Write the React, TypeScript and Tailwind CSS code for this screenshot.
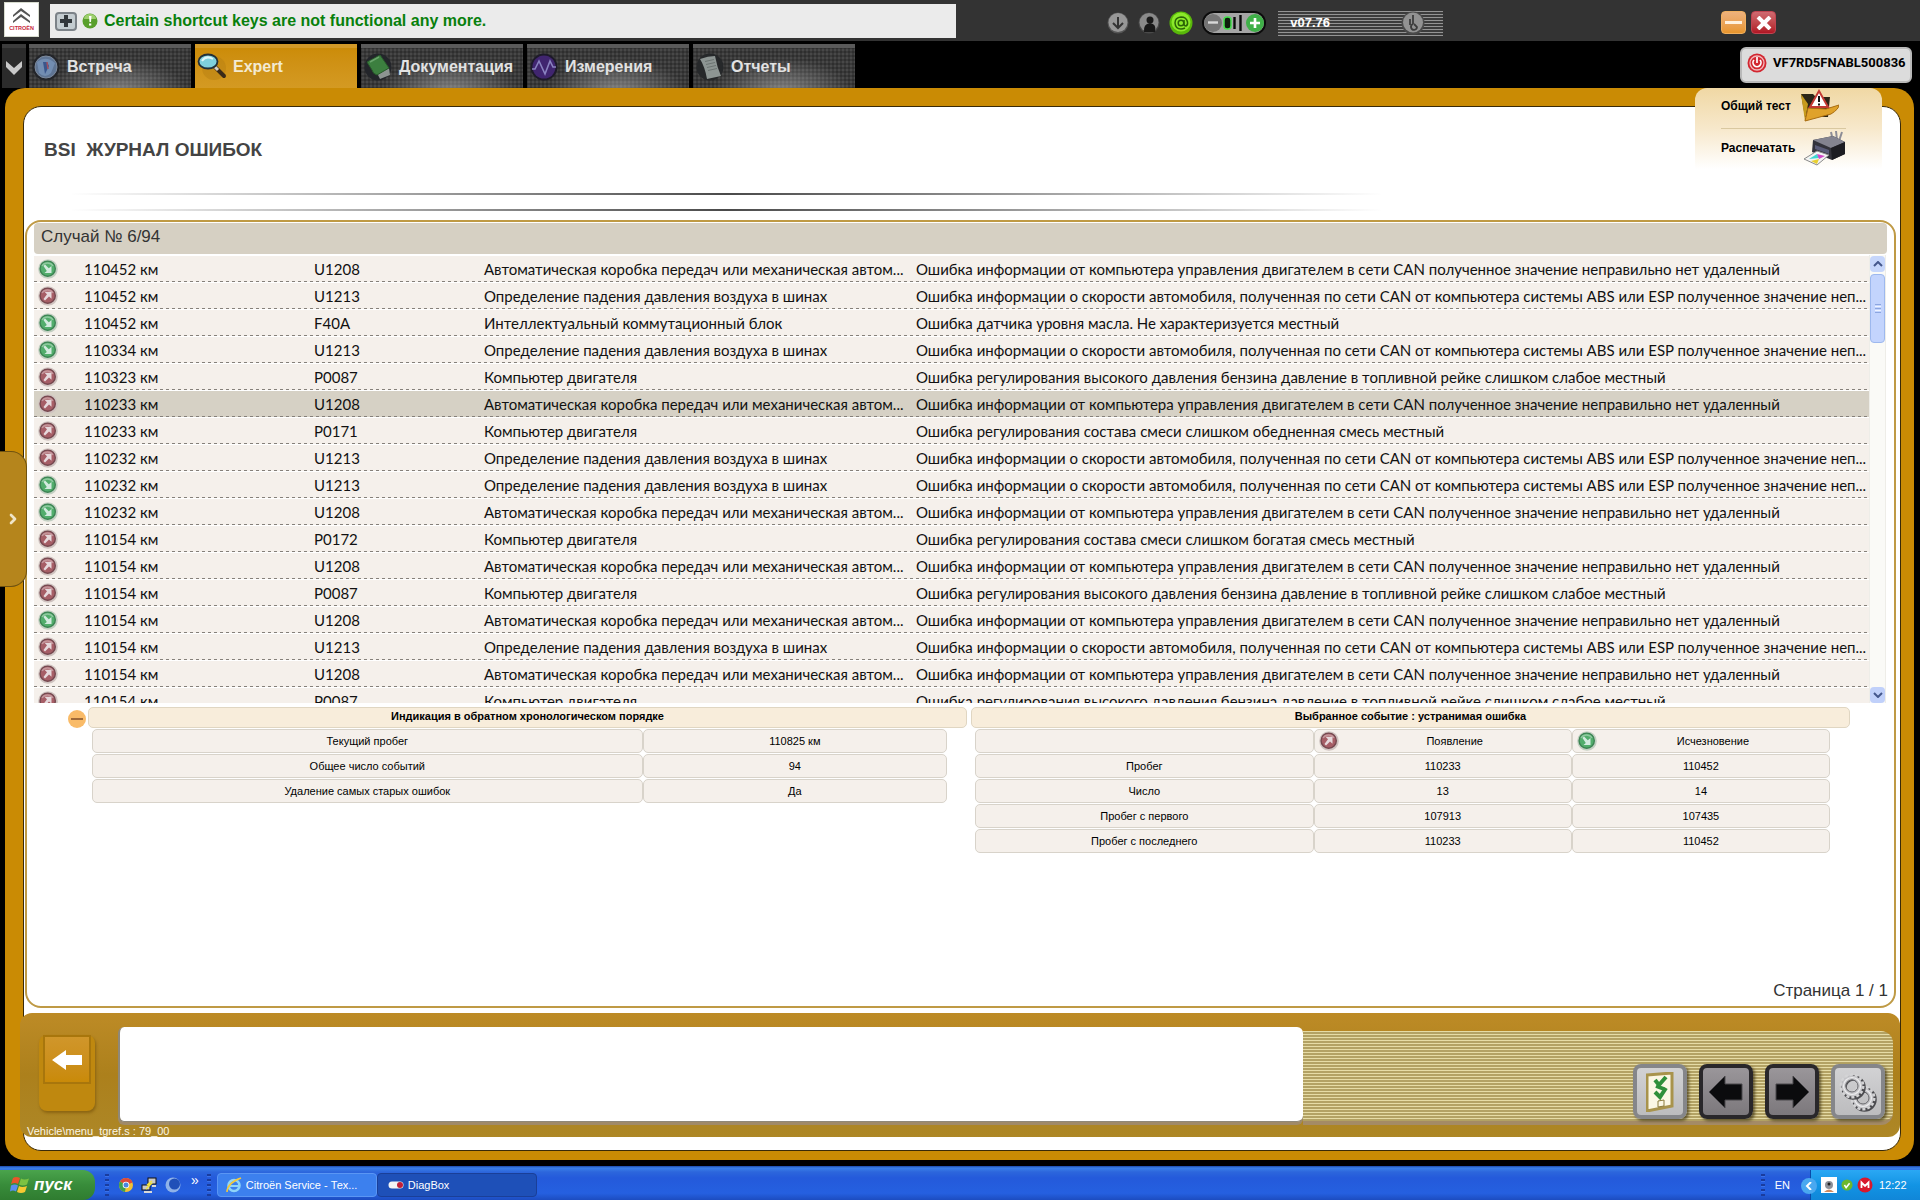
import React, { useState } from 'react';
import { ChevronRight } from 'lucide-react';

type EventKind = 'appeared' | 'cleared';

interface FaultEvent {
  kind: EventKind;
  km: string;
  code: string;
  unit: string;
  text: string;
}

const GEARBOX = 'Автоматическая коробка передач или механическая автом...';
const TYRES = 'Определение падения давления воздуха в шинах';
const ENGINE = 'Компьютер двигателя';
const ERR_ENGINE_CAN =
  'Ошибка информации от компьютера управления двигателем в сети CAN полученное значение неправильно нет удаленный';
const ERR_SPEED_CAN =
  'Ошибка информации о скорости автомобиля, полученная по сети CAN от компьютера системы ABS или ESP полученное значение неп...';
const ERR_PRESSURE =
  'Ошибка регулирования высокого давления бензина давление в топливной рейке слишком слабое местный';

const events: FaultEvent[] = [
  { kind: 'cleared', km: '110452 км', code: 'U1208', unit: GEARBOX, text: ERR_ENGINE_CAN },
  { kind: 'appeared', km: '110452 км', code: 'U1213', unit: TYRES, text: ERR_SPEED_CAN },
  { kind: 'cleared', km: '110452 км', code: 'F40A', unit: 'Интеллектуальный коммутационный блок', text: 'Ошибка датчика уровня масла. Не характеризуется местный' },
  { kind: 'cleared', km: '110334 км', code: 'U1213', unit: TYRES, text: ERR_SPEED_CAN },
  { kind: 'appeared', km: '110323 км', code: 'P0087', unit: ENGINE, text: ERR_PRESSURE },
  { kind: 'appeared', km: '110233 км', code: 'U1208', unit: GEARBOX, text: ERR_ENGINE_CAN },
  { kind: 'appeared', km: '110233 км', code: 'P0171', unit: ENGINE, text: 'Ошибка регулирования состава смеси слишком обедненная смесь местный' },
  { kind: 'appeared', km: '110232 км', code: 'U1213', unit: TYRES, text: ERR_SPEED_CAN },
  { kind: 'cleared', km: '110232 км', code: 'U1213', unit: TYRES, text: ERR_SPEED_CAN },
  { kind: 'cleared', km: '110232 км', code: 'U1208', unit: GEARBOX, text: ERR_ENGINE_CAN },
  { kind: 'appeared', km: '110154 км', code: 'P0172', unit: ENGINE, text: 'Ошибка регулирования состава смеси слишком богатая смесь местный' },
  { kind: 'appeared', km: '110154 км', code: 'U1208', unit: GEARBOX, text: ERR_ENGINE_CAN },
  { kind: 'appeared', km: '110154 км', code: 'P0087', unit: ENGINE, text: ERR_PRESSURE },
  { kind: 'cleared', km: '110154 км', code: 'U1208', unit: GEARBOX, text: ERR_ENGINE_CAN },
  { kind: 'appeared', km: '110154 км', code: 'U1213', unit: TYRES, text: ERR_SPEED_CAN },
  { kind: 'appeared', km: '110154 км', code: 'U1208', unit: GEARBOX, text: ERR_ENGINE_CAN },
  { kind: 'appeared', km: '110154 км', code: 'P0087', unit: ENGINE, text: ERR_PRESSURE },
];

const summary = [
  ['Текущий пробег', '110825 км'],
  ['Общее число событий', '94'],
  ['Удаление самых старых ошибок', 'Да'],
];

const details = [
  ['Пробег', '110233', '110452'],
  ['Число', '13', '14'],
  ['Пробег с первого', '107913', '107435'],
  ['Пробег с последнего', '110233', '110452'],
];

const KindIcon: React.FC<{ kind: EventKind }> = ({ kind }) => (
  <svg viewBox="0 0 20 20" className="block h-5 w-5">
    <circle cx="10" cy="10" r="9.8" fill={kind === 'cleared' ? '#c3cfc2' : '#cfc3c0'} />
    <circle cx="9.7" cy="9.7" r="7.6" fill={kind === 'cleared' ? '#52ad6c' : '#a65e66'} stroke={kind === 'cleared' ? '#3c8453' : '#75484f'} strokeWidth="1.4" />
    <path d="M4 7a6 5 0 0 1 11 0" fill="none" stroke="#fff" strokeOpacity=".35" strokeWidth="1.6" />
    {kind === 'cleared' ? (
      <path d="M5.500 7 7 5.500l3.800 3.800L13.500 7v7h-7l2.300-2z" fill="#d3eadf" />
    ) : (
      <path d="M5.500 13 7 14.500l4-4 2.500 2.300V5.800h-7L9 8.300z" fill="#e6d9dc" />
    )}
  </svg>
);

const GlobeIcon = () => (
  <svg viewBox="0 0 28 28" className="h-7 w-7">
    <circle cx="14" cy="14" r="13.500" fill="#23252a" />
    <circle cx="14" cy="14" r="11" fill="#5f7594" stroke="#7d8a9c" />
    <path d="M5 9q9-7 18 1l-4 10q-6 6-12 0z" fill="#7f9cc4" opacity=".6" />
    <path d="m11 9 2 12 4-8-2-4z" fill="#3a568c" />
    <path d="m15 9 1 7" stroke="#a05060" strokeWidth="1.500" />
  </svg>
);

const LensIcon = () => (
  <svg viewBox="0 0 30 28" className="h-7 w-[30px]">
    <circle cx="17" cy="15" r="12" fill="#b77f12" opacity=".5" />
    <path d="m18 14 9 9" stroke="#3a2a18" strokeWidth="4" strokeLinecap="round" />
    <path d="m18 14 3 3" stroke="#d8d0c0" strokeWidth="3" />
    <ellipse cx="11" cy="8.500" rx="9.500" ry="7" fill="#7fd0dc" stroke="#22303a" strokeWidth="1.800" />
    <path d="M5 8q4-6 11-2" fill="none" stroke="#dff6f8" strokeWidth="2" />
  </svg>
);

const BookIcon = () => (
  <svg viewBox="0 0 28 28" className="h-7 w-7">
    <circle cx="14" cy="14" r="13.500" fill="#23252a" />
    <path d="m13 20 12-5 1 7-10 4z" fill="#8d9491" />
    <path d="M3 9 16 2l9 13-12 7q-4-1-5-5z" fill="#3c7f3f" stroke="#285a2b" />
    <path d="m6 9 9-5" stroke="#6aa56c" strokeWidth="1.500" />
  </svg>
);

const WaveIcon = () => (
  <svg viewBox="0 0 28 28" className="h-7 w-7">
    <circle cx="14" cy="14" r="13.500" fill="#1d1a29" />
    <circle cx="14" cy="14" r="11.500" fill="#40256f" />
    <path d="M2 16h3l4-8 6 13 5-13 3 6h3" fill="none" stroke="#8a83c0" strokeWidth="1.600" />
  </svg>
);

const ReportIcon = () => (
  <svg viewBox="0 0 28 28" className="h-7 w-7">
    <circle cx="14" cy="14" r="13.500" fill="#26282a" />
    <path d="M4 6q8-3 15-3 2 11 6 20l-14 3Q9 14 4 6z" fill="#8d9593" />
    <path d="M9 8.500l9-2M10 11.500l9-2M11 14.500l9-2M12 17.500l9-2" stroke="#6c7472" />
  </svg>
);

const tabs = [
  { label: 'Встреча', icon: <GlobeIcon /> },
  { label: 'Expert', icon: <LensIcon /> },
  { label: 'Документация', icon: <BookIcon /> },
  { label: 'Измерения', icon: <WaveIcon /> },
  { label: 'Отчеты', icon: <ReportIcon /> },
];

const darkTab =
  'bg-[#2e2e2e] bg-[radial-gradient(ellipse_at_55%_110%,rgba(190,190,190,0.55),transparent_55%),radial-gradient(#484848_1px,transparent_2px)] bg-[length:auto,4px_4px] border-t-4 border-[#5a5a5a]';

const TopBar = () => (
  <header className="flex h-[41px] items-start bg-[#333333]">
    <div className="mt-0.5 ml-1 h-[35px] w-[35px] border border-[#d8dccf] bg-white">
      <svg viewBox="0 0 33 33" className="h-full w-full">
        <path d="m8 14 8-6 9 6v-2l-9-7-8 7zM8 20l8-6 9 6v-2l-9-7-8 7z" fill="#555" />
        <text x="16.500" y="27" textAnchor="middle" fontSize="5.500" fontWeight="bold" fill="#c8283c" fontFamily="Liberation Sans">CITROËN</text>
      </svg>
    </div>
    <div className="mt-1 ml-[11px] flex h-[34px] w-[47.200%] items-center bg-[#ebebeb] pl-[5px]">
      <button aria-label="Развернуть" className="flex h-[19px] w-[22px] items-center justify-center rounded border-2 border-[#7c8288] bg-[#c4ccd0]">
        <svg viewBox="0 0 12 12" className="h-3 w-3"><path d="M4 0h4v4h4v4H8v4H4V8H0V4h4z" fill="#32373b" /></svg>
      </button>
      <svg viewBox="0 0 16 16" className="ml-[5px] h-4 w-4">
        <circle cx="8" cy="8" r="7.500" fill="#5aa02c" />
        <path d="M2 6a6 5 0 0 1 12 0z" fill="#9fd06f" />
        <path d="M7 3h2.500L9 9H7.500zM7 10.500h2.300v2H7z" fill="#fff" />
      </svg>
      <p className="ml-1.5 truncate text-base font-bold text-[#08800c]">Certain shortcut keys are not functional any more.</p>
    </div>
    <div className="ml-[151px] flex h-[46px] items-center">
      <svg viewBox="0 0 22 22" className="h-[22px] w-[22px]">
        <circle cx="11" cy="11" r="10.500" fill="#555" /><circle cx="11" cy="10.500" r="9.500" fill="#979797" />
        <path d="M11 5v11M6 11l5 5 5-5" fill="none" stroke="#333" strokeWidth="2" />
      </svg>
      <svg viewBox="0 0 22 22" className="ml-[9px] h-[22px] w-[22px]">
        <circle cx="11" cy="11" r="10.500" fill="#4a4a4a" /><circle cx="11" cy="10.500" r="9.500" fill="#8a8a8a" />
        <circle cx="12" cy="8" r="3.500" fill="#191919" /><path d="M6 20q-1-8 6-9 7 1 5 9z" fill="#191919" />
      </svg>
      <svg viewBox="0 0 24 24" className="ml-[9px] h-6 w-6">
        <circle cx="12" cy="12" r="11.500" fill="#59b80a" /><circle cx="12" cy="11" r="9.500" fill="#8be82a" />
        <circle cx="12" cy="12" r="2.800" fill="none" stroke="#2b6406" strokeWidth="1.500" />
        <path d="M15 9v4q0 2 2 2 2-1 1.500-4-1-5-6.500-5-6 .5-6 6 .5 6 6 6 2 0 4-1" fill="none" stroke="#2b6406" strokeWidth="1.500" />
      </svg>
      <svg viewBox="0 0 64 24" className="ml-[9px] h-6 w-16">
        <rect x="1" y="1" width="62" height="22" rx="11" fill="#a5a5a5" stroke="#0c0c0c" strokeWidth="2" />
        <circle cx="11" cy="12" r="9" fill="#747474" /><path d="M6 11.500h10" stroke="#d8d8d8" strokeWidth="2.400" />
        <rect x="22" y="6" width="7" height="12" rx="3" fill="#0d1c0d" stroke="#44e04c" strokeWidth="1.500" />
        <path d="M32.500 6v12M38.500 4v16" stroke="#0a0a0a" strokeWidth="2.400" />
        <circle cx="53" cy="12" r="9" fill="#3fb048" /><path d="M48 12h10M53 7v10" stroke="#fff" strokeWidth="2.600" />
      </svg>
      <div className="ml-3 flex h-[25px] w-[165px] items-center justify-between bg-[repeating-linear-gradient(#949494_0_1px,#3c3c3c_1px_3px)] pr-[18px] pl-3 text-[13px] font-bold text-white">
        <span>v07.76</span>
        <svg viewBox="0 0 24 24" className="h-6 w-6">
          <circle cx="12" cy="12" r="11.500" fill="#4a4a4a" /><circle cx="12" cy="11.500" r="10" fill="#929292" />
          <path d="M12 4v9M9 8v6M12 13a3 3 0 1 0 4 3l-3-3" fill="none" stroke="#3d3d3d" strokeWidth="1.800" />
        </svg>
      </div>
    </div>
    <div className="mt-[11px] mr-36 ml-auto flex gap-[5px]">
      <button aria-label="Свернуть" className="flex h-[23px] w-[25px] items-center justify-center rounded-sm border border-[#f0b060] bg-linear-to-b from-[#eeb27c] to-[#e8962c]">
        <span className="h-[3px] w-[17px] bg-[#fff1de]" />
      </button>
      <button aria-label="Закрыть" className="flex h-[23px] w-[25px] items-center justify-center rounded-sm border border-[#c04450] bg-linear-to-b from-[#cf6a70] to-[#b01424]">
        <svg viewBox="0 0 16 14" className="h-3.5 w-4"><path d="m2 1 12 12M14 1 2 13" stroke="#fff" strokeWidth="4" /></svg>
      </button>
    </div>
  </header>
);

const Tabs = () => {
  const [active, setActive] = useState('Expert');
  return (
    <nav className="flex h-[47px] items-stretch bg-black pt-[3px] pl-0.5">
      <button aria-label="Меню" className="flex w-6 items-center justify-center border-t-4 border-[#3c3c3c] bg-[#2b2b2b]">
        <svg viewBox="0 0 16 14" className="h-3.5 w-4"><path d="M0 0 8 7l8-7v6l-8 8-8-8z" fill="#c9c9c9" /></svg>
      </button>
      <div className="ml-[3px] flex gap-1">
        {tabs.map((tab) => (
          <button
            key={tab.label}
            onClick={() => setActive(tab.label)}
            className={`flex w-[162px] items-center gap-1.5 border-t-4 pb-0.5 pl-0.5 text-base font-bold whitespace-nowrap ${
              active === tab.label
                ? 'border-[#d39a28] bg-linear-to-b from-[#cc8c08] to-[#d49a22] text-[#f3ead2]'
                : `text-[#e2e2e2] ${darkTab}`
            }`}
          >
            <span className="flex w-[30px] shrink-0 justify-center">{tab.icon}</span>
            {tab.label}
          </button>
        ))}
      </div>
      <button className="mt-[3px] mr-2 mb-[5px] ml-auto flex w-[172px] items-center rounded-md border-2 border-[#b9b9b9] bg-[#dcdcdc] pb-1 pl-[5px] font-[Roboto,sans-serif] text-[13px] font-bold text-black">
        <svg viewBox="0 0 20 20" className="mr-1.5 h-5 w-5 shrink-0">
          <circle cx="10" cy="10" r="9.500" fill="#d22630" /><circle cx="10" cy="10" r="7" fill="none" stroke="#f2b9bb" strokeWidth="1.300" />
          <path d="M10 4v6M7 7a4 4 0 1 0 6 0" fill="none" stroke="#fff" strokeWidth="1.700" />
        </svg>
        VF7RD5FNABL500836
      </button>
    </nav>
  );
};

const ActionMenu = () => (
  <div className="absolute top-0 right-8 w-[187px] rounded-t-xl bg-linear-to-b from-[#f0d8a4] via-[#f7e8cb] to-white pl-[26px] text-xs font-bold text-black">
    <button className="flex h-10 w-full items-center gap-2 pb-1 text-left">
      Общий тест
      <svg viewBox="0 0 40 34" className="h-[34px] w-10">
        <path d="M2 5h12l3 3h14l-2 20H6z" fill="#2b2618" /><path d="m2 5 4 27 3-17z" fill="#c69a1c" />
        <path d="m6 32 3-13 18 1 13-4q0 4-8 9z" fill="#e0a22a" stroke="#a86c10" />
        <path d="m20 2 9 16H11z" fill="#fff" stroke="#c23a34" strokeWidth="2" /><path d="M20 7v6M20 14.500v2" stroke="#111" strokeWidth="2" />
      </svg>
    </button>
    <div className="mr-9 h-px bg-[#d9c8a0]" />
    <button className="flex h-10 w-full items-center gap-2 pb-0.5 text-left">
      Распечатать
      <svg viewBox="0 0 44 36" className="h-9 w-11">
        <path d="m28 2 2 9M33 1l1 9M39 2l-3 9" stroke="#8c8c96" strokeWidth="2" />
        <path d="M10 10 30 6l12 6v12l-13 6L9 22z" fill="#33333b" /><path d="m10 10 20-4 12 6-14 6z" fill="#83838f" />
        <path d="m28 18 14-6v12l-13 6z" fill="#1c1c22" /><path d="m12 15 14 5v4l-14-5z" fill="#5a5c78" />
        <path d="m1 29 13-8 12 4-12 10z" fill="#f4f4f4" stroke="#8a8a8a" />
        <path d="m6 29 8-5 2 4z" fill="#3fd8d0" /><path d="m14 24 8 2-6 3z" fill="#d048c8" /><path d="m8 31 8-2-2 5z" fill="#e8cf30" />
      </svg>
    </button>
  </div>
);

const ScrollBar = () => (
  <div className="flex w-[17px] flex-col border-x border-[#eeede8] bg-[#fafaf7]">
    <button aria-label="Вверх" className="mt-px flex h-4 items-center justify-center rounded-sm bg-[#c6d6fb]">
      <svg viewBox="0 0 10 6" className="h-1.5 w-2.5"><path d="m1 5 4-4 4 4" fill="none" stroke="#44578c" strokeWidth="2" /></svg>
    </button>
    <div className="mt-0.5 flex h-[69px] flex-col items-center justify-center gap-px rounded-sm border border-[#9db8ee] bg-[#c3d4fd]">
      <span className="h-px w-1.5 bg-[#8ca6e0]" />
      <span className="h-px w-1.5 bg-[#eef3ff]" />
      <span className="h-px w-1.5 bg-[#8ca6e0]" />
      <span className="h-px w-1.5 bg-[#eef3ff]" />
      <span className="h-px w-1.5 bg-[#8ca6e0]" />
    </div>
    <button aria-label="Вниз" className="mt-auto flex h-4 items-center justify-center rounded-sm bg-[#c0d0fa]">
      <svg viewBox="0 0 10 6" className="h-1.5 w-2.5"><path d="m1 1 4 4 4-4" fill="none" stroke="#44578c" strokeWidth="2" /></svg>
    </button>
  </div>
);

const EventList = () => {
  const [selected, setSelected] = useState(5);
  return (
    <div className="mt-px mr-2 ml-[7px] flex h-[448px]">
      <div className="min-w-0 flex-1 overflow-hidden">
        <table className="w-full table-fixed border-separate border-spacing-x-0 border-spacing-y-px text-left font-[Lato,sans-serif] text-[15px] text-[#111]">
          <colgroup>
            <col className="w-[50px]" />
            <col className="w-[230px]" />
            <col className="w-[170px]" />
            <col className="w-[432px]" />
            <col />
          </colgroup>
          <tbody>
            {events.map((ev, i) => (
              <tr
                key={i}
                onClick={() => setSelected(i)}
                className={`h-[26px] cursor-pointer bg-[repeating-linear-gradient(90deg,#85807a_0_3px,transparent_3px_6px)] bg-[length:100%_1px] bg-bottom bg-no-repeat leading-[26px] whitespace-nowrap [&>td]:p-0 ${
                  selected === i ? 'bg-[#d6d1c5]' : 'bg-[#f5f0eb]'
                }`}
              >
                <td><div className="pl-1"><KindIcon kind={ev.kind} /></div></td>
                <td>{ev.km}</td>
                <td>{ev.code}</td>
                <td>{ev.unit}</td>
                <td>{ev.text}</td>
              </tr>
            ))}
          </tbody>
        </table>
      </div>
      <ScrollBar />
    </div>
  );
};

const cell = 'h-6 rounded-[5px] border border-[#d8d3ca] bg-[#f5f0eb] p-0 text-center font-normal';

const InfoPanels = () => (
  <div className="mt-1 mr-11 ml-[41px] flex text-[11px] leading-4 text-black">
    <button aria-label="Скрыть" className="mt-[3px] mr-0.5 flex h-[18px] w-[18px] items-center justify-center rounded-full bg-[#f9bb68]">
      <span className="h-0.5 w-3 bg-[#a06a38]" />
    </button>
    <section className="mr-1 flex-1">
      <h2 className="h-[21px] rounded-[5px] border border-[#e0d6c2] bg-[#f8eddb] text-center font-bold">Индикация в обратном хронологическом порядке</h2>
      <div className="mr-5 ml-1">
        <table className="w-full table-fixed border-separate border-spacing-x-0 border-spacing-y-px">
          <colgroup><col className="w-[64.400%]" /><col /></colgroup>
          <tbody>
            {summary.map(([label, value]) => (
              <tr key={label}>
                <th scope="row" className={cell}>{label}</th>
                <td className={cell}>{value}</td>
              </tr>
            ))}
          </tbody>
        </table>
      </div>
    </section>
    <section className="flex-1">
      <h2 className="h-[21px] rounded-[5px] border border-[#e0d6c2] bg-[#f8eddb] text-center font-bold">Выбранное событие : устранимая ошибка</h2>
      <div className="mr-5 ml-1">
        <table className="w-full table-fixed border-separate border-spacing-x-0 border-spacing-y-px">
          <colgroup><col className="w-[39.600%]" /><col /><col /></colgroup>
          <thead>
            <tr>
              <td className={cell} />
              <th scope="col" className={cell}>
                <div className="flex items-center pl-1"><KindIcon kind="appeared" /><span className="flex-1">Появление</span></div>
              </th>
              <th scope="col" className={cell}>
                <div className="flex items-center pl-1"><KindIcon kind="cleared" /><span className="flex-1">Исчезновение</span></div>
              </th>
            </tr>
          </thead>
          <tbody>
            {details.map(([label, appeared, cleared]) => (
              <tr key={label}>
                <th scope="row" className={cell}>{label}</th>
                <td className={cell}>{appeared}</td>
                <td className={cell}>{cleared}</td>
              </tr>
            ))}
          </tbody>
        </table>
      </div>
    </section>
  </div>
);

const lightKey = 'flex h-[55px] w-[54px] shrink-0 items-center justify-center rounded-lg border-4 border-[#85868a] bg-linear-to-b from-[#d2d2d4] to-[#bcbcbe] shadow-[2px_2px_3px_rgba(60,50,20,0.7)]';
const darkKey = 'flex h-[55px] w-[54px] shrink-0 items-center justify-center rounded-lg border-4 border-[#29272a] bg-linear-to-b from-[#9a969a] to-[#7c787c] shadow-[2px_2px_3px_rgba(60,50,20,0.7)]';

const Gear: React.FC<{ cx: number; cy: number }> = ({ cx, cy }) => (
  <g fill="none">
    <circle cx={cx + 1.5} cy={cy + 1.5} r="9.500" stroke="#4c4c50" strokeWidth="5.500" />
    <circle cx={cx} cy={cy} r="11" stroke="#d4d4d6" strokeWidth="3" strokeDasharray="3 1.935" />
    <circle cx={cx} cy={cy} r="8.500" stroke="#c6c6c9" strokeWidth="4" />
    <circle cx={cx} cy={cy} r="8.500" stroke="#ececee" strokeWidth="1.200" />
    <circle cx={cx} cy={cy} r="6" stroke="#6a6a6e" />
  </g>
);

const CommandBar = () => (
  <div className="-ml-1 flex h-[124px] flex-col rounded-xl bg-linear-to-b from-[#bd8b26] via-[#ac801c] to-[#ad8726]">
    <div className="mt-3.5 mr-[7px] flex h-24">
      <div className="w-[98px] shrink-0 pt-2 pl-[19px]">
        <div className="h-[76px] w-14 rounded-lg bg-[#bf880f] px-1 shadow-[1px_2px_3px_#8a6412]">
          <button aria-label="Назад" className="flex h-[49px] w-12 items-center justify-center border-2 border-[#a8760c] bg-linear-to-b from-[#d0962a] to-[#c98a08]">
            <svg viewBox="0 0 30 20" className="h-5 w-[30px]"><path d="M0 10 14 0v5h16v10H14v5z" fill="#fff" /></svg>
          </button>
        </div>
      </div>
      <div className="h-[95px] flex-[1189] basis-0 rounded-md border-b border-l-2 border-[#8f8878] bg-white shadow-[0_3px_0_#a08a68]" />
      <div className="mt-1 flex h-[94px] flex-[585] basis-0 items-end justify-end gap-3 rounded-r-xl border-b-4 border-[#a48b66] bg-[repeating-linear-gradient(#e6dca6_0_1px,#b3a264_1px_3px)] pr-2 pb-0.5">
        <button aria-label="Проверка" className={lightKey}>
          <svg viewBox="0 0 28 40" className="h-10 w-7">
            <path d="m1 3 25-2v33L1 39z" fill="#fbf7e4" stroke="#a8934c" strokeWidth="3" />
            <path d="m9 8 4 5 7-8M9 20l5 5 6-9M10 14l8 3" fill="none" stroke="#2f8f3a" strokeWidth="4" />
            <path d="m12 29 6-1v6l-6 1z" fill="none" stroke="#8a7a3a" />
          </svg>
        </button>
        <button aria-label="Предыдущая" className={darkKey}>
          <svg viewBox="0 0 36 34" className="h-[34px] w-9"><path d="M1 17 17 1v8h17v16H17v8z" fill="#0b0b0d" stroke="#4a484c" /></svg>
        </button>
        <button aria-label="Следующая" className={darkKey}>
          <svg viewBox="0 0 36 34" className="h-[34px] w-9"><path d="M35 17 19 1v8H2v16h17v8z" fill="#0b0b0d" stroke="#4a484c" /></svg>
        </button>
        <button aria-label="Настройки" className={lightKey}>
          <svg viewBox="0 0 40 42" className="h-[42px] w-10">
            <Gear cx={25} cy={27} />
            <Gear cx={14} cy={15} />
          </svg>
        </button>
      </div>
    </div>
    <p className="pt-0.5 pl-[7px] text-[11px] leading-3 text-[#fbf6e6]">Vehicle\menu_tgref.s : 79_00</p>
  </div>
);

const Grip = () => <span className="block h-[22px] w-1 bg-[repeating-linear-gradient(#1a3c9e_0_2px,#3a72ea_2px_3px,transparent_3px_5px)]" />;

const TaskBar = () => (
  <footer className="flex h-[34px] items-end bg-[linear-gradient(#1c48a8_0,#3a80e8_2px,#2c66dc_6px,#245adb_12px,#2560e0_80%,#1c4cc0)] text-[11px] text-white">
    <button className="flex h-[30px] w-[95px] items-center rounded-r-xl bg-linear-to-b from-[#4aa44c] via-[#388c3a] to-[#2f7c30] pl-2.5 text-[17px] font-bold text-white italic">
      <svg viewBox="0 0 20 18" className="mr-1 h-[18px] w-5">
        <path d="M3 2q3-2 7 0L8 8Q5 6 1 8z" fill="#e8562a" /><path d="M11 2.500q3 2 8 0l-2 6q-4 2-8 0z" fill="#7cc242" />
        <path d="M1 9.500q4-2 7 0l-2 6q-3-2-6 0z" fill="#5a8ef0" /><path d="M9 10q3 2 8 0l-2 6q-4 2-8 0z" fill="#f6c932" />
      </svg>
      пуск
    </button>
    <div className="flex h-[30px] flex-1 items-center">
      <span className="ml-2.5"><Grip /></span>
      <svg viewBox="0 0 14 14" className="ml-2.5 h-3.5 w-3.5">
        <circle cx="7" cy="7" r="7" fill="#f0c132" /><path d="M7 7 1 3.500A7 7 0 0 1 13.500 4.500z" fill="#dc4a3a" /><path d="M7 7 1 3.500A7 7 0 0 0 6 14z" fill="#40a050" />
        <circle cx="7" cy="7" r="3.300" fill="#fff" /><circle cx="7" cy="7" r="2.500" fill="#4a86e0" />
      </svg>
      <svg viewBox="0 0 16 16" className="ml-2 h-4 w-4">
        <rect x="7" y="1" width="8" height="6" fill="#c9c9c9" stroke="#111" /><rect x="1" y="8" width="8" height="5" fill="#c9c9c9" stroke="#111" />
        <path d="M3 15h8M11 9h4" stroke="#d8d8d8" strokeWidth="2" /><path d="m11 4-5 4 4-1-5 5" fill="none" stroke="#f4e33c" strokeWidth="1.500" />
      </svg>
      <svg viewBox="0 0 16 16" className="ml-2 h-4 w-4">
        <circle cx="8" cy="8" r="7.500" fill="#8fb2e8" /><circle cx="9.500" cy="7" r="5.500" fill="#2050b8" />
      </svg>
      <span className="mb-2.5 ml-2.5 text-sm">»</span>
      <span className="ml-2"><Grip /></span>
      <button className="ml-1.5 flex h-6 w-40 items-center rounded-sm border border-[#5a96f4] bg-[#3c80ee] pl-2 whitespace-nowrap">
        <svg viewBox="0 0 16 16" className="mr-1 h-4 w-4">
          <circle cx="8" cy="8.500" r="5.500" fill="none" stroke="#8fd4f8" strokeWidth="2.600" /><path d="M4 9h9" stroke="#8fd4f8" strokeWidth="2" />
          <path d="M1 15Q1 6 15 1" fill="none" stroke="#f4c83a" strokeWidth="1.500" />
        </svg>
        Citroën Service - Тех...
      </button>
      <button className="flex h-6 w-40 items-center rounded-sm border border-[#1a3f98] bg-[#1e50b8] pl-2.5">
        <svg viewBox="0 0 16 8" className="mr-1 h-2 w-4"><rect x=".5" y=".5" width="15" height="7" rx="3.500" fill="#f4f4f4" /><circle cx="12" cy="4" r="3" fill="#c02038" /></svg>
        DiagBox
      </button>
    </div>
    <div className="flex h-[30px] items-center gap-2.5"><Grip /><span className="pr-5">EN</span></div>
    <div className="relative flex h-[30px] w-[110px] items-center border-l border-[#0a4aa8] bg-linear-to-b from-[#2aa8f4] via-[#1294e4] to-[#1086d8] pl-2.5">
      <button aria-label="Показать значки" className="absolute top-2 -left-2.5 flex h-4 w-4 items-center justify-center rounded-full bg-[#4aa8f0]">
        <svg viewBox="0 0 8 8" className="h-2 w-2"><path d="M6 0 2 4l4 4" fill="none" stroke="#fff" strokeWidth="2" /></svg>
      </button>
      <svg viewBox="0 0 16 16" className="h-4 w-4"><path d="M0 0h16v16H0z" fill="#fff" /><circle cx="8" cy="8" r="4" fill="#8c9098" /><path d="M3 15q5-5 10 0z" fill="#d08a60" /><circle cx="8" cy="7" r="1.500" fill="#222" /></svg>
      <svg viewBox="0 0 14 14" className="ml-1 h-3 w-3"><circle cx="7" cy="7" r="6.500" fill="#6cb82c" /><path d="m4 7 2 3 4-5" fill="none" stroke="#fff" strokeWidth="1.800" /></svg>
      <svg viewBox="0 0 16 16" className="ml-1 h-4 w-4"><circle cx="8" cy="8" r="7.500" fill="#d8182c" /><path d="M4.500 11V5.500L8 9l3.500-3.500V11" fill="none" stroke="#fff" strokeWidth="1.800" /></svg>
      <span className="ml-1.5">12:22</span>
    </div>
  </footer>
);

export default function App() {
  return (
    <div className="relative flex min-h-screen flex-col bg-black font-['Liberation_Sans',Arial,sans-serif]">
      <TopBar />
      <Tabs />
      <main className="relative mr-1.5 mb-1.5 ml-[5px] flex flex-1 flex-col rounded-[20px] bg-[#ca8b04] pt-[18px] pr-[13px] pb-[9px] pl-[18px]">
        <div className="flex flex-1 flex-col rounded-[18px] border border-[#3a2a08] bg-white">
          <h1 className="pt-[30px] pl-5 text-[19px] leading-[26px] font-bold whitespace-pre text-[#444]">BSI  ЖУРНАЛ ОШИБОК</h1>
          <div className="mt-[30px] ml-[46px] h-0.5 w-[70%] bg-linear-to-r from-transparent via-[#4a4a4a] to-transparent" />
          <div className="mt-3.5 ml-[46px] h-0.5 w-[70%] bg-linear-to-r from-transparent via-[#4a4a4a] to-transparent" />
          <div className="mx-px mt-[9px] mr-1 flex flex-1 flex-col rounded-2xl border-2 border-[#bf9a45]">
            <p className="mx-[7px] mt-px h-[31px] rounded bg-[#d6d0c3] pl-[7px] text-[17px] leading-7 text-[#333]">Случай № 6/94</p>
            <EventList />
            <InfoPanels />
            <p className="mt-auto pr-1.5 pb-[5px] text-right text-[17px] leading-5 text-[#333]">Страница 1 / 1</p>
          </div>
          <div className="mt-[5px] mb-[13px]"><CommandBar /></div>
        </div>
        <ActionMenu />
      </main>
      <button aria-label="Панель" className="absolute top-[451px] left-0 flex h-[136px] w-[27px] items-center justify-center rounded-r-2xl border border-l-0 border-[#6f5210] bg-[#b5851c]">
        <ChevronRight className="h-4 w-4 text-[#efe4c8]" strokeWidth={4} />
      </button>
      <TaskBar />
    </div>
  );
}
